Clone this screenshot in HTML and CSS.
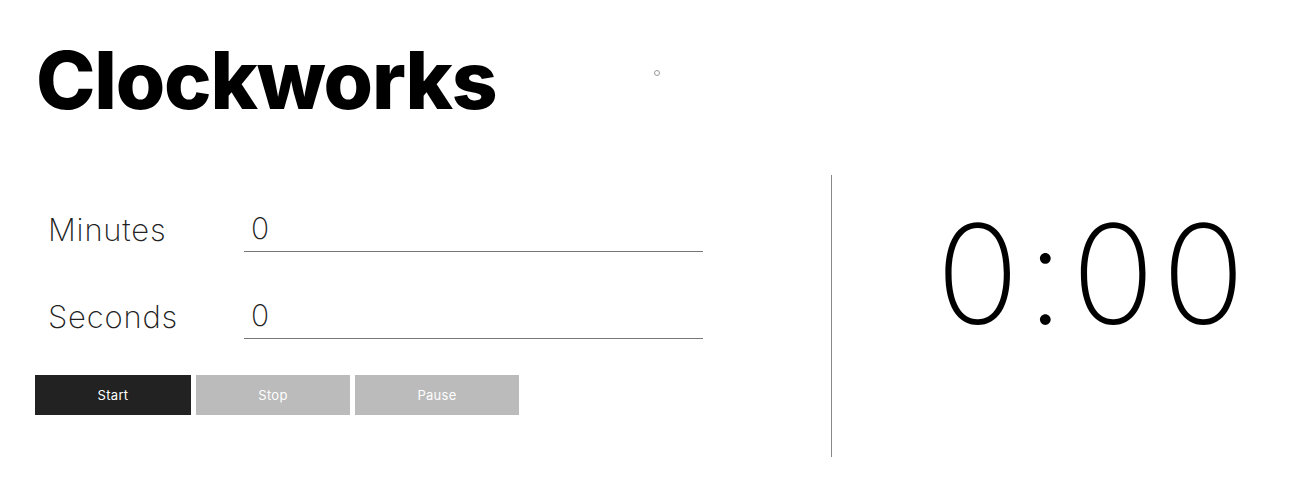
FILE: index.html
```html
<!DOCTYPE html>
<html>
<head>
<meta charset="utf-8">
<link rel="stylesheet" href="styles.css">
</head>
<body>
<header class="header">
  <h1 class="title">Clockworks</h1>
  <span class="dot"></span>
</header>
<main class="main">
  <section class="controls">
    <div class="field">
      <label class="label">Minutes</label>
      <input class="input" type="text" value="0">
    </div>
    <div class="field">
      <label class="label">Seconds</label>
      <input class="input" type="text" value="0">
    </div>
    <div class="buttons">
      <button class="btn btn-start">Start</button>
      <button class="btn btn-stop">Stop</button>
      <button class="btn btn-pause">Pause</button>
    </div>
  </section>
  <section class="display">
    <div class="clock">0:00</div>
  </section>
</main>
</body>
</html>
```
FILE: styles.css
```css
html, body {
  margin: 0;
  padding: 0;
  background: #fff;
}
body {
  font-family: Inter, "Liberation Sans", sans-serif;
  color: #000;
}
.header {
  display: flex;
  align-items: center;
  height: 160px;
  padding-left: 36px;
}
.title {
  margin: 0;
  font-size: 80px;
  font-weight: 800;
  line-height: 1;
  letter-spacing: -1.2px;
  width: 618px;
}
.dot {
  width: 4px;
  height: 4px;
  border: 1px solid #999;
  border-radius: 50%;
  margin-top: -14px;
}
.main {
  display: flex;
  padding-top: 15px;
}
.controls {
  width: 831px;
  padding-left: 35px;
  box-sizing: border-box;
  padding-top: 35px;
}
.field {
  display: flex;
  align-items: flex-end;
  height: 42px;
  margin-bottom: 45px;
}
.label {
  width: 196px;
  padding-left: 13px;
  font-size: 31px;
  font-weight: 200;
  letter-spacing: 0.8px;
  color: #222;
  line-height: 1;
  padding-bottom: 7px;
}
.input {
  width: 459px;
  box-sizing: border-box;
  border: 0;
  border-bottom: 1px solid #777;
  font-family: inherit;
  font-size: 30px;
  font-weight: 200;
  padding: 0 0 5px 7px;
  line-height: 1;
  color: #222;
  outline: none;
}
.buttons {
  display: flex;
  gap: 5px;
  margin-top: -9px;
}
.btn {
  height: 40px;
  border: 0;
  color: #fff;
  font-family: inherit;
  font-size: 13px;
  font-weight: 400;
  letter-spacing: 0.3px;
  padding: 0;
}
.btn-start { width: 156px; background: #222; }
.btn-stop { width: 154px; background: #bbb; }
.btn-pause { width: 164px; background: #bbb; }
.display {
  border-left: 1px solid #888;
  height: 282px;
  flex: 1;
  display: flex;
  align-items: center;
  justify-content: center;
  padding-left: 48px;
  padding-bottom: 84px;
  box-sizing: border-box;
}
.clock {
  font-size: 138px;
  font-weight: 200;
  line-height: 1;
  letter-spacing: 7px;
}
```
